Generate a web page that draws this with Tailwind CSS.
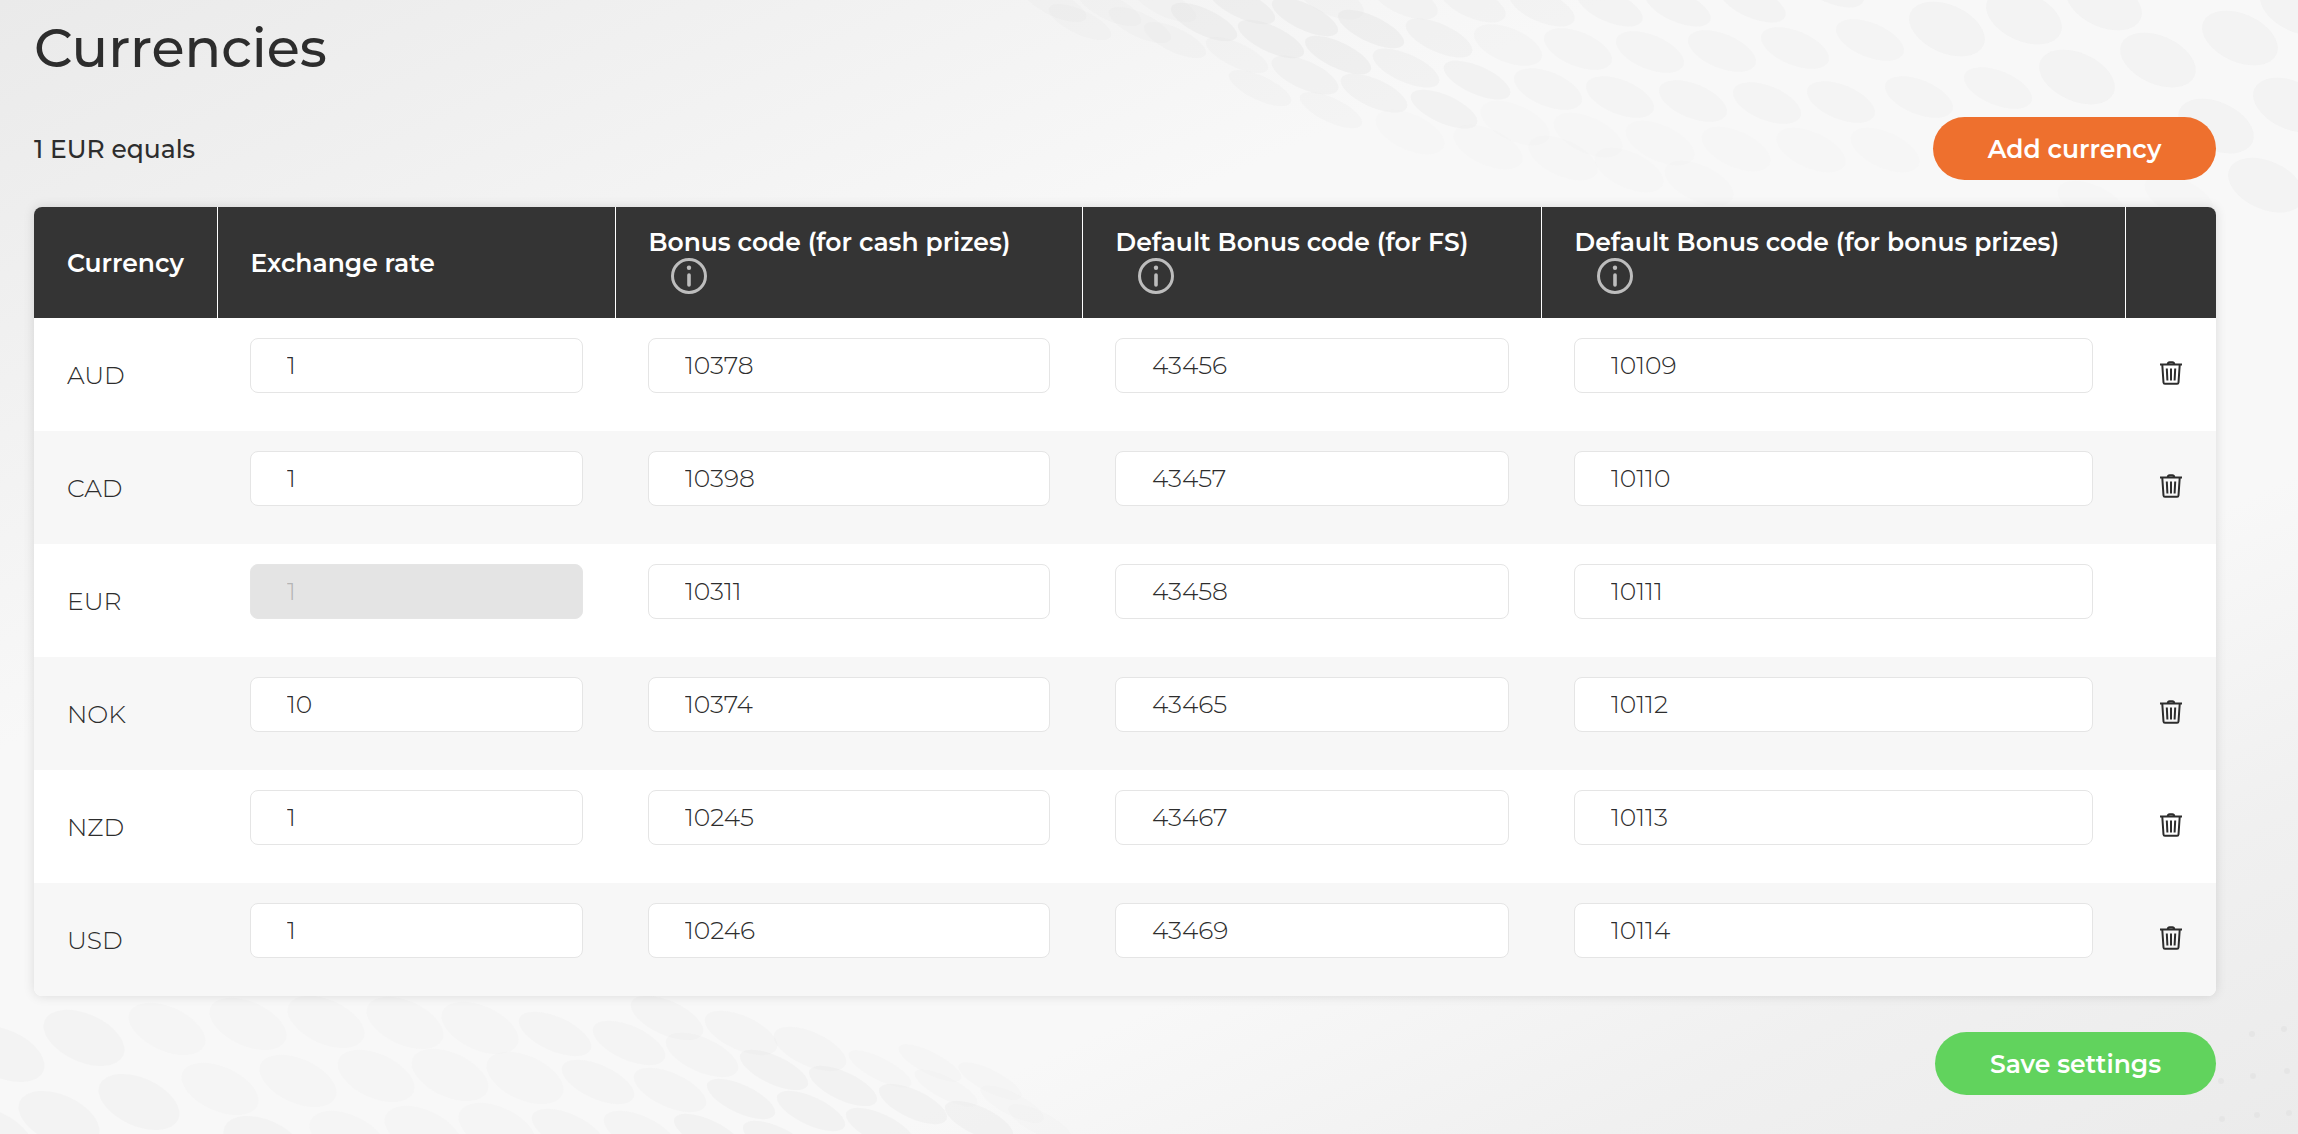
<!DOCTYPE html>
<html lang="en">
<head>
    <meta charset="UTF-8">
    <meta name="viewport" content="width=device-width, initial-scale=1.0">
    <title>Currencies</title>
    <script src="https://cdn.jsdelivr.net/npm/@tailwindcss/browser@4"></script>
</head>
<body class="relative min-h-screen overflow-x-hidden bg-[linear-gradient(155deg,#eaeaea_0%,#f0f0f0_15%,#f8f8f8_34%,#f8f8f8_70%,#f0f0f0_85%,#ebebeb_100%)] font-['Montserrat','Inter',sans-serif] text-[25px] leading-8 text-[#2d2d2d]">
    <!-- Halftone dots behind the page -->
    <svg class="absolute inset-0 -z-10 h-full w-full" viewBox="0 0 2298 1134" preserveAspectRatio="none" aria-hidden="true">
        <g id="dots" fill="#e4e4e4"></g>
    </svg>

    <main class="pt-5 pr-[82px] pb-10 pl-[34px]">
        <h1 class="text-[54px] leading-[56px] font-medium">Currencies</h1>

        <div class="mt-[41px] flex items-center justify-between">
            <p class="font-medium">1 EUR equals</p>
            <button type="button" class="h-[63px] w-[283px] rounded-full bg-[#ee702e] font-semibold text-white">Add currency</button>
        </div>

        <div class="mt-[27px] overflow-hidden rounded-lg bg-white shadow-[0_0_12px_rgba(0,0,0,0.12)]">
            <table class="w-full table-fixed text-left">
                <colgroup>
                    <col class="w-[183px]">
                    <col class="w-[398px]">
                    <col class="w-[467px]">
                    <col class="w-[459px]">
                    <col class="w-[584px]">
                    <col class="w-[91px]">
                </colgroup>
                <thead class="bg-[#343434] text-white">
                    <tr class="h-[111px] divide-x divide-white">
                        <th class="pl-[33px] font-semibold">Currency</th>
                        <th class="pl-[33px] font-semibold">Exchange rate</th>
                        <th class="pb-1.5 pl-[33px] font-semibold">
                            <span class="block">Bonus code (for cash prizes)</span>
                            <svg class="ml-[22px] block size-9 text-[#bdbdbd]" viewBox="0 0 36 36" fill="none" stroke="currentColor"><circle cx="18" cy="18" r="16.5" stroke-width="3"/><path d="M18 17v10" stroke-width="3.6" stroke-linecap="round"/><circle cx="18" cy="9.8" r="2.2" fill="currentColor" stroke="none"/></svg>
                        </th>
                        <th class="pb-1.5 pl-[33px] font-semibold">
                            <span class="block">Default Bonus code (for FS)</span>
                            <svg class="ml-[22px] block size-9 text-[#bdbdbd]" viewBox="0 0 36 36" fill="none" stroke="currentColor"><circle cx="18" cy="18" r="16.5" stroke-width="3"/><path d="M18 17v10" stroke-width="3.6" stroke-linecap="round"/><circle cx="18" cy="9.8" r="2.2" fill="currentColor" stroke="none"/></svg>
                        </th>
                        <th class="pb-1.5 pl-[33px] font-semibold">
                            <span class="block">Default Bonus code (for bonus prizes)</span>
                            <svg class="ml-[22px] block size-9 text-[#bdbdbd]" viewBox="0 0 36 36" fill="none" stroke="currentColor"><circle cx="18" cy="18" r="16.5" stroke-width="3"/><path d="M18 17v10" stroke-width="3.6" stroke-linecap="round"/><circle cx="18" cy="9.8" r="2.2" fill="currentColor" stroke="none"/></svg>
                        </th>
                        <th></th>
                    </tr>
                </thead>
                <tbody id="currency-rows"></tbody>
            </table>
        </div>

        <div class="mt-9 flex justify-end">
            <button type="button" class="h-[63px] w-[281px] rounded-full bg-[#61d35d] font-semibold text-white">Save settings</button>
        </div>
    </main>

    <script>
        const currencies = [
            { code: 'AUD', rate: '1', cash: '10378', fs: '43456', bonus: '10109' },
            { code: 'CAD', rate: '1', cash: '10398', fs: '43457', bonus: '10110' },
            { code: 'EUR', rate: '1', cash: '10311', fs: '43458', bonus: '10111', base: true },
            { code: 'NOK', rate: '10', cash: '10374', fs: '43465', bonus: '10112' },
            { code: 'NZD', rate: '1', cash: '10245', fs: '43467', bonus: '10113' },
            { code: 'USD', rate: '1', cash: '10246', fs: '43469', bonus: '10114' }
        ];

        // The base currency always has rate 1 and can't be edited or removed
        function field(c, key, label) {
            const locked = c.base && key === 'rate';
            return `
                <td class="pt-5 pr-8 pl-[33px] align-top">
                    <input type="text" value="${c[key]}" aria-label="${c.code} ${label}" ${locked ? 'disabled' : ''}
                        class="block h-[55px] w-full rounded-lg border border-[#e5e5e5] bg-white pr-4 pb-0.5 pl-9 font-light disabled:bg-[#e4e4e4] disabled:text-[#b5b5b5]">
                </td>`;
        }

        document.getElementById('currency-rows').innerHTML = currencies.map(c => `
            <tr class="h-[113px] even:bg-[#f7f7f7]">
                <td class="pl-[33px] font-light">${c.code}</td>
                ${field(c, 'rate', 'exchange rate')}
                ${field(c, 'cash', 'bonus code for cash prizes')}
                ${field(c, 'fs', 'default bonus code for FS')}
                ${field(c, 'bonus', 'default bonus code for bonus prizes')}
                <td class="pb-1">
                    ${c.base ? '' : `
                    <button type="button" aria-label="Delete ${c.code}" class="mx-auto block">
                        <svg class="h-6 w-[22px]" viewBox="0 0 22 24" fill="none" stroke="#2d2d2d" stroke-width="2">
                            <path d="M0 3.5h22M2.3 4l1.2 17.5q.1 1.300 1.400 1.300h12.200q1.300 0 1.400-1.300l1.200-17.500M7.500 3.500q.5-2.300 2-2.300h3q1.500 0 2 2.300"/>
                            <path d="M6.800 7.500l.6 12M11 7.500v12M15.200 7.500l-.6 12"/>
                        </svg>
                    </button>`}
                </td>
            </tr>
        `).join('');

        // x, y of every dot; each strip has its own radii, tilt and strength
        const strips = [
            { rx: 35, ry: 15, tilt: 23, alpha: 0.22, at: [[1331,0],[1405,0],[1473,3],[1542,7],[1610,7],[1678,7],[1753,3],[1831,-12]] },
            { rx: 36, ry: 13, tilt: 25, alpha: 0.4, at: [[1242,5],[1305,17],[1371,29],[1204,22],[1271,39],[1338,55]] },
            { rx: 36, ry: 14, tilt: 24, alpha: 0.3, at: [[1439,38],[1406,68],[1477,80],[1374,93],[1305,75],[1444,109]] },
            { rx: 34, ry: 12, tilt: 25, alpha: 0.18, at: [[1165,4],[1110,8],[1055,4],[1140,25],[1080,22],[1175,40],[1237,55],[1331,110],[1260,88]] },
            { rx: 36, ry: 17, tilt: 22, alpha: 0.17, at: [[1508,45],[1578,49],[1650,52],[1722,51],[1795,48],[1870,40],[1548,89],[1620,97],[1693,101],[1767,103],[1841,102],[1919,97],[1998,88]] },
            { rx: 37, ry: 18, tilt: 24, alpha: 0.08, at: [[1515,123],[1588,135],[1660,143],[1736,149],[1811,150],[1885,150],[1410,132],[1488,147],[1563,158],[1629,170],[1699,183],[2092,203],[2179,197]] },
            { rx: 40, ry: 24, tilt: 24, alpha: 0.26, at: [[1947,29],[2024,17],[2104,3],[2077,77],[2158,60],[2240,38],[2216,126],[2291,105],[2266,185],[2298,8]] },
            { rx: 43, ry: 24, tilt: 24, alpha: 0.24, at: [[84,1037],[139,1101],[4,1053],[59,1118],[-8,1134],[264,1143]] },
            { rx: 41, ry: 22, tilt: 24, alpha: 0.12, at: [[167,1028],[248,1023],[326,1021],[405,1022],[480,1027],[220,1088],[298,1080],[376,1075],[450,1074],[525,1077],[348,1136],[423,1131],[497,1128]] },
            { rx: 39, ry: 17, tilt: 24, alpha: 0.18, at: [[555,1033],[629,1042],[702,1054],[598,1081],[670,1089],[568,1130],[640,1132],[667,1017],[741,1032],[810,1048]] },
            { rx: 37, ry: 14, tilt: 25, alpha: 0.3, at: [[774,1069],[843,1085],[913,1103],[979,1120],[741,1098],[811,1110],[880,1127],[708,1133],[777,1140]] },
            { rx: 35, ry: 11, tilt: 27, alpha: 0.12, at: [[880,1068],[946,1087],[1012,1103],[1040,1122],[930,1062],[990,1080]] },
            { rx: 3, ry: 3, tilt: 0, alpha: 0.8, at: [[2252,1033],[2284,1028],[2221,1080],[2253,1075],[2287,1070],[2222,1118],[2257,1114],[2289,1112]] }
        ];

        document.getElementById('dots').innerHTML = strips.map(s => s.at.map(([x, y]) =>
            `<ellipse rx="${s.rx}" ry="${s.ry}" opacity="${s.alpha}" transform="translate(${x} ${y}) rotate(${s.tilt})"/>`
        ).join('')).join('');
    </script>
</body>
</html>
